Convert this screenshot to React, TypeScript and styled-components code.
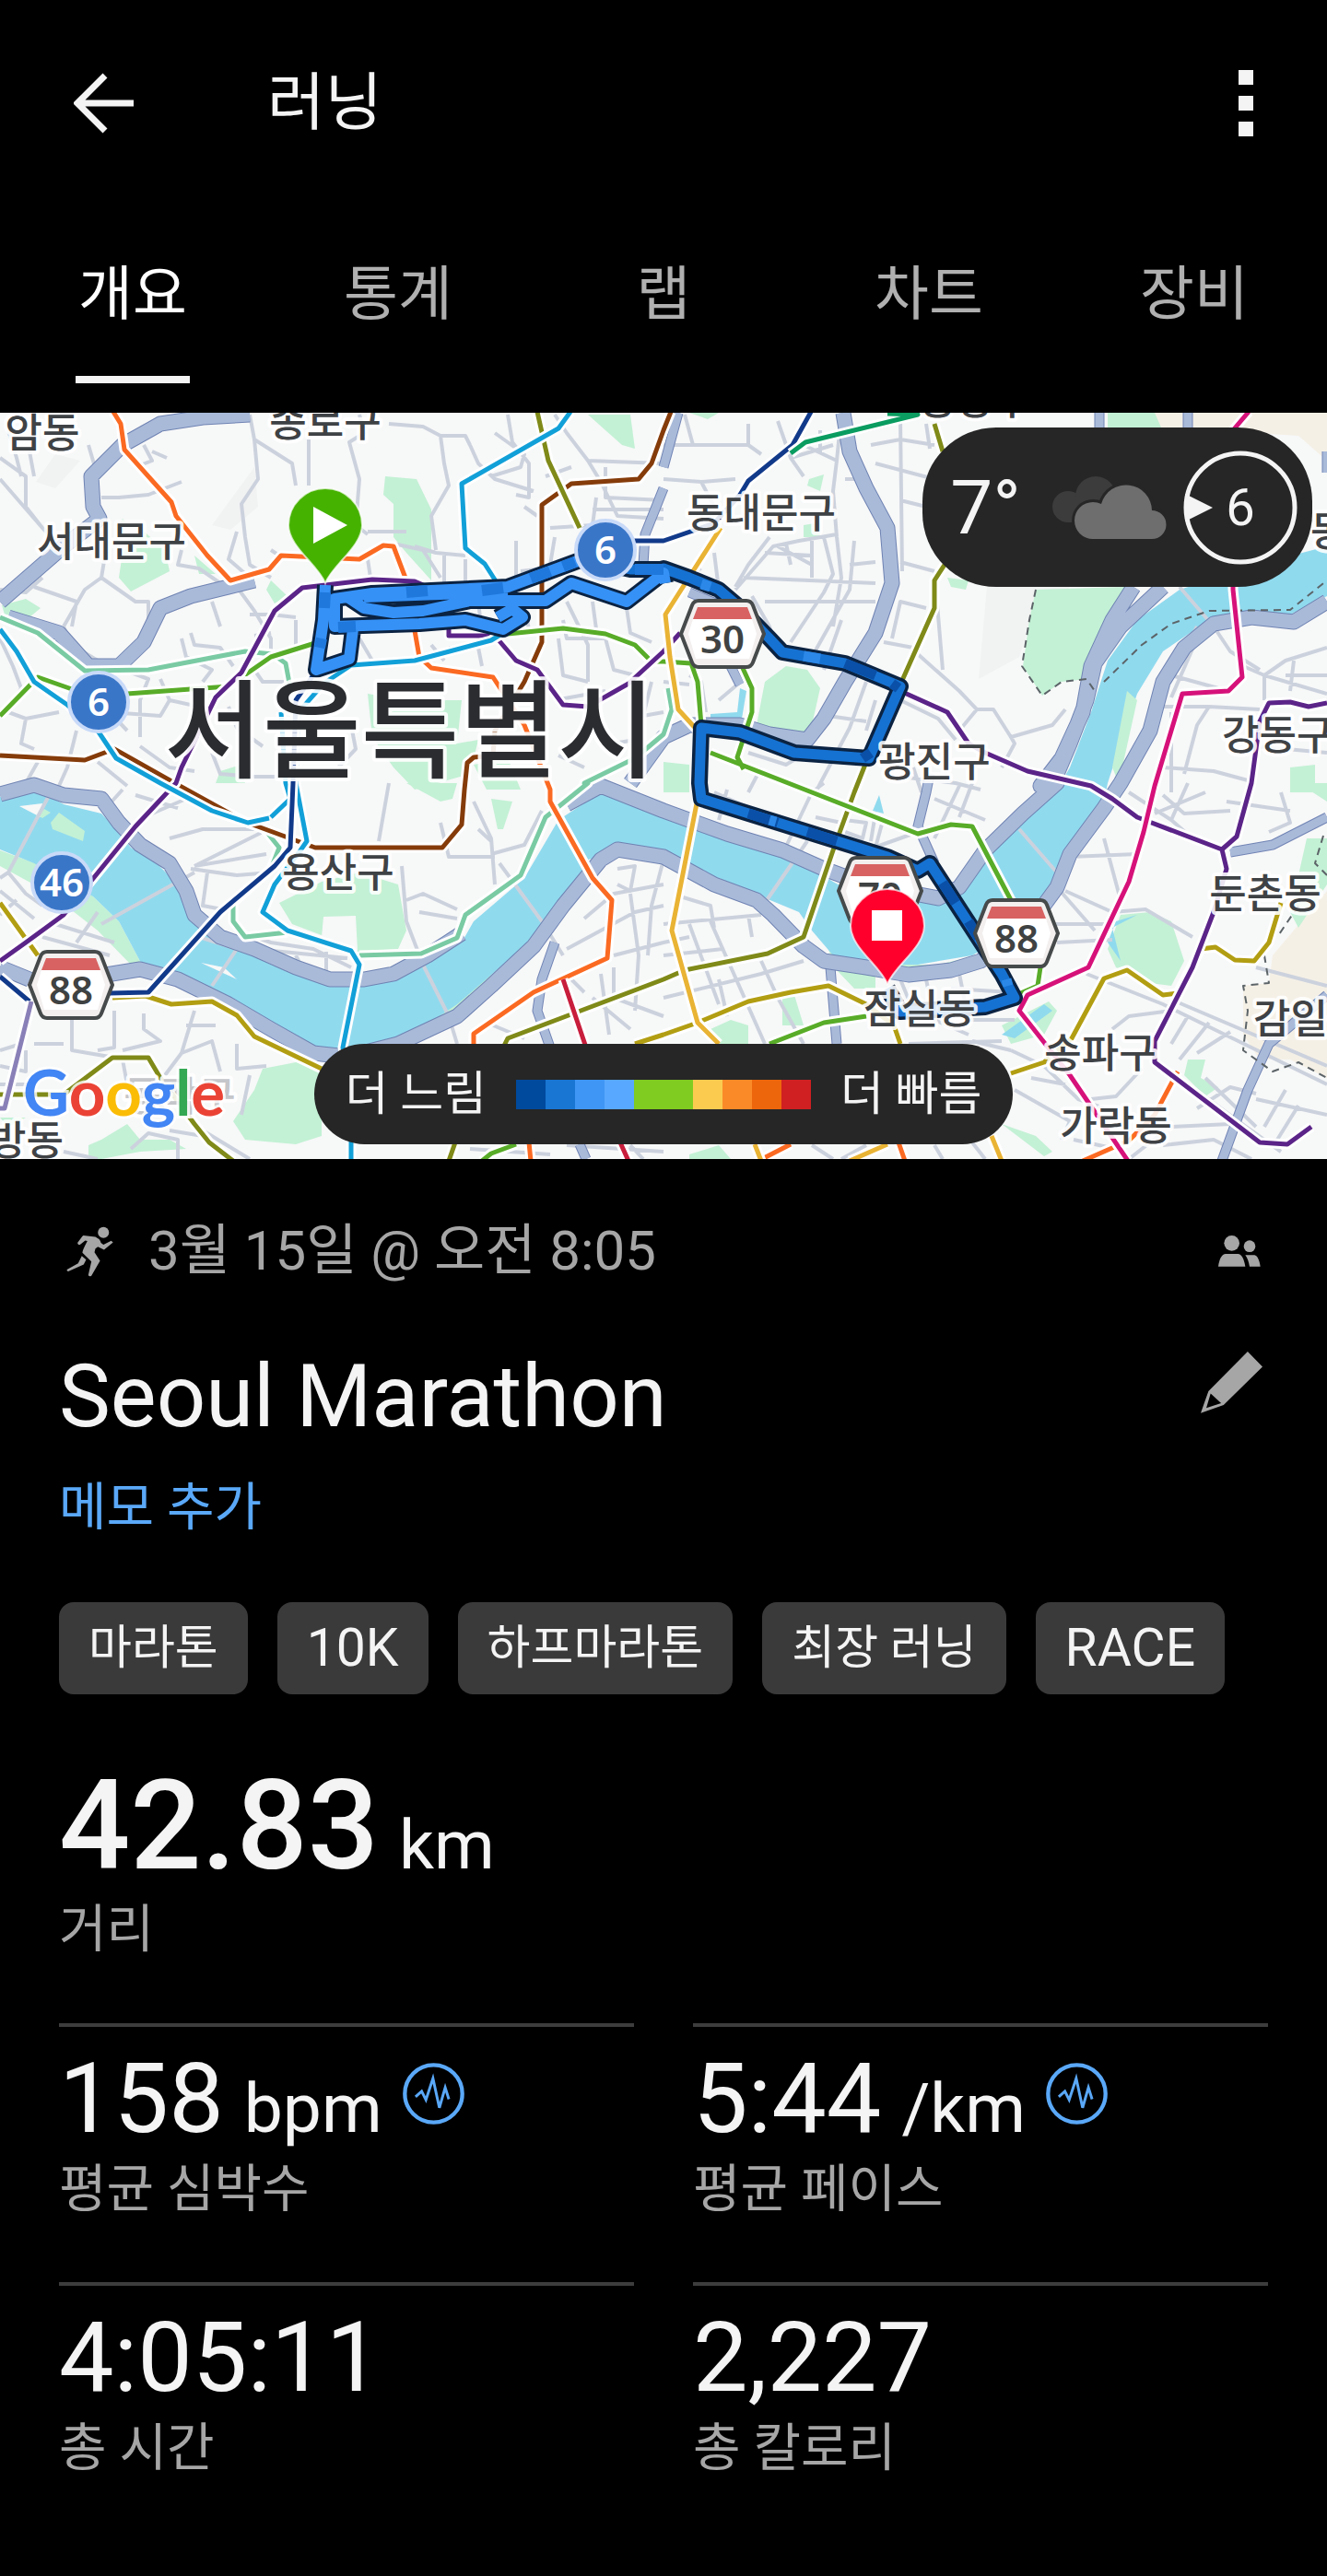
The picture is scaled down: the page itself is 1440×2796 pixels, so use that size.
import React from "react";
import styled, { createGlobalStyle, css } from "styled-components";

const color = {
  page: "#000000",
  text: "#f4f4f4",
  muted: "#a6a6a6",
  accent: "#5aa8f8",
  chip: "#3a3a3a",
  line: "#3d3d3d",
  overlay: "#262626",
};

const fontStack = `Roboto, "Noto Sans CJK KR", sans-serif`;

const GlobalStyle = createGlobalStyle`
  * { box-sizing: border-box; }
  body {
    margin: 0;
    background: ${color.page};
    color: ${color.text};
    font-family: ${fontStack};
  }
  h1, h2, p, dl, dd, dt, ul { margin: 0; padding: 0; }
`;

/* ---------- Layout ---------- */

const Page = styled.main`
  display: flex;
  flex-direction: column;
`;

const plainButton = css`
  border: 0;
  padding: 0;
  background: none;
  color: inherit;
  font-family: inherit;
  cursor: pointer;
`;

const TopBar = styled.header`
  display: flex;
  align-items: center;
  height: 224px;
  padding: 0 64px;
`;

const IconButton = styled.button<{ $width: number }>`
  ${plainButton}
  display: flex;
  align-items: center;
  justify-content: center;
  width: ${(p) => p.$width}px;
  height: 96px;
`;

const ScreenTitle = styled.h1`
  flex: 1;
  padding-left: 128px;
  font-size: 68px;
  line-height: 80px;
  font-weight: 400;
`;

const Tabs = styled.nav`
  display: flex;
  margin-bottom: 32px;
`;

const Tab = styled.button<{ $active?: boolean }>`
  ${plainButton}
  flex: 1;
  display: flex;
  justify-content: center;
  color: ${(p) => (p.$active ? "#ffffff" : "#b0b0b0")};
  font-size: 64px;

  span {
    display: flex;
    align-items: center;
    justify-content: center;
    min-width: 124px;
    height: 192px;
    padding-bottom: 6px;
    border-bottom: 8px solid ${(p) => (p.$active ? color.text : "transparent")};
  }
`;

/* ---------- Map ---------- */

const MapPanel = styled.section`
  position: relative;
`;

const MapCanvas = styled.svg`
  display: block;
  width: 100%;
  height: auto;
`;

const PlaceName = styled.text<{ $size?: number; $ink?: string }>`
  font-family: "Noto Sans CJK KR", sans-serif;
  font-size: ${(p) => p.$size ?? 44}px;
  font-weight: 500;
  fill: ${(p) => p.$ink ?? "#3f4245"};
  stroke: rgba(255, 255, 255, 0.9);
  stroke-width: 8px;
  stroke-linejoin: round;
  paint-order: stroke;
`;

const ShieldText = styled.text<{ $ink: string }>`
  font-family: "Noto Sans", sans-serif;
  font-size: 42px;
  font-weight: 600;
  fill: ${(p) => p.$ink};
  text-anchor: middle;
`;

const Attribution = styled.text`
  font-family: Lato, sans-serif;
  font-size: 69px;
  font-weight: 700;
  stroke: rgba(255, 255, 255, 0.8);
  stroke-width: 6px;
  paint-order: stroke;
`;

const WeatherPill = styled.div`
  position: absolute;
  top: 16px;
  right: 16px;
  display: flex;
  align-items: center;
  justify-content: flex-end;
  gap: 18px;
  width: 423px;
  height: 173px;
  padding: 0 16px;
  border-radius: 80px;
  background: ${color.overlay};
`;

const Temperature = styled.span`
  padding-right: 16px;
  font-size: 82px;
  line-height: 96px;
`;

const Wind = styled.div`
  display: grid;
  place-items: center;

  svg,
  span {
    grid-area: 1 / 1;
  }

  span {
    font-size: 56px;
    line-height: 64px;
  }
`;

const PaceLegend = styled.div`
  position: absolute;
  bottom: 16px;
  left: 50%;
  transform: translateX(-50%);
  display: flex;
  align-items: center;
  justify-content: center;
  gap: 32px;
  width: 758px;
  height: 109px;
  border-radius: 55px;
  background: ${color.overlay};
  font-size: 51px;
  line-height: 64px;
  white-space: nowrap;
`;

const Scale = styled.div`
  display: flex;
`;

const Swatch = styled.i<{ $fill: string }>`
  width: 32px;
  height: 32px;
  background: ${(p) => p.$fill};
`;

/* ---------- Details ---------- */

const Details = styled.section`
  padding: 64px 64px 0;
`;

const MetaRow = styled.div`
  display: flex;
  align-items: center;
  gap: 38px;
  height: 72px;
  padding: 0 8px;
  color: ${color.muted};
  font-size: 60px;
  line-height: 72px;
`;

const When = styled.p`
  flex: 1;
`;

const TitleRow = styled.div`
  display: flex;
  justify-content: space-between;
  align-items: flex-start;
  margin-top: 66px;
  padding-right: 6px;
  color: ${color.muted};
`;

const ActivityTitle = styled.h2`
  color: ${color.text};
  font-size: 94px;
  line-height: 112px;
  font-weight: 400;
`;

const EditButton = styled.button`
  ${plainButton}
  display: flex;
  align-items: center;
  height: 80px;
`;

const MemoButton = styled.button`
  ${plainButton}
  display: block;
  margin-top: 28px;
  color: ${color.accent};
  font-size: 56px;
  line-height: 72px;
`;

const Chips = styled.ul`
  display: flex;
  flex-wrap: wrap;
  gap: 32px;
  margin-top: 67px;
  list-style: none;
`;

const Chip = styled.li<{ $latin?: boolean }>`
  padding: 0 32px;
  border-radius: 16px;
  background: ${color.chip};
  font-size: ${(p) => (p.$latin ? 57 : 51)}px;
  line-height: 100px;
`;

const Stat = styled.div`
  display: flex;
  flex-direction: column-reverse;
`;

const StatLabel = styled.dt`
  color: ${color.muted};
  font-size: 56px;
  line-height: 64px;
`;

const Distance = styled(Stat).attrs({ as: "dl" })`
  margin: 63px 0 70px;
`;

const DistanceValue = styled.dd`
  display: flex;
  align-items: baseline;
  gap: 22px;
  font-size: 136px;
  line-height: 160px;
  font-weight: 500;
`;

const Unit = styled.span`
  font-size: 75px;
  line-height: 80px;
  font-weight: 400;
`;

const StatGrid = styled.dl`
  display: grid;
  grid-template-columns: 1fr 1fr;
  gap: 69px 64px;
`;

const GridStat = styled(Stat)`
  gap: 6px;
  padding-top: 18px;
  border-top: 4px solid ${color.line};
`;

const StatValue = styled.dd`
  display: flex;
  align-items: baseline;
  gap: 22px;
  font-size: 106px;
  line-height: 120px;
`;

const TrendButton = styled.button`
  ${plainButton}
  display: flex;
  align-self: center;
  padding-bottom: 12px;
`;

/* ---------- Icons ---------- */

const BackIcon = () => (
  <svg width="66" height="66" viewBox="0 0 66 66" fill="none" stroke={color.text} strokeWidth="7">
    <path d="M34 3 4 33l30 30M4 33h61" />
  </svg>
);

const MoreIcon = () => (
  <svg width="16" height="72" viewBox="0 0 16 72" fill={color.text}>
    <path d="M0 0h16v16H0zM0 28h16v16H0zM0 56h16v16H0z" />
  </svg>
);

const RunnerIcon = () => (
  <svg width="51" height="55" viewBox="36 34 152 164" fill="currentColor">
    <circle cx="156" cy="54" r="18" />
    <path d="M91 64 130 68 142 76Q146 80 148 88L156 94 181 81 187 86 158 110 138 100 130 106 127 118 145 146 117 194Q110 198 107 192L117 148 88 120Q87 114 104 82L97 80 80 94Q73 96 72 88L88 66Z" />
    <path d="M86 130 100 142 92 158 42 180Q36 178 38 174L74 154Z" />
  </svg>
);

const PeopleIcon = () => (
  <svg width="46" height="34" viewBox="94 38 138 102" fill="currentColor">
    <circle cx="138" cy="63" r="25" />
    <circle cx="196" cy="73" r="19" />
    <path d="M94 139C97 115 106 98 118 98H158C170 98 178 115 182 139Z" />
    <path d="M182 102H212C222 103 229 122 231 139H196C193 122 189 112 182 102Z" />
  </svg>
);

const PencilIcon = () => (
  <svg width="67" height="67" viewBox="38 407 200 200" fill="currentColor" fillRule="evenodd">
    <path d="M190 407 238 456 112 580 38 606 63 535ZM70 543 104 574 56 590Z" />
  </svg>
);

const TrendIcon = () => (
  <svg width="67" height="67" viewBox="38 61 202 202" fill="none" stroke={color.accent}>
    <circle cx="139" cy="162" r="94" strokeWidth="13" />
    <path d="M80 172 100 154 114 182 137 112 158 208 177 142 189 180" strokeWidth="9" />
  </svg>
);

const CloudIcon = () => (
  <svg width="124" height="68" viewBox="0 0 124 68">
    <g fill="#3c3c3c">
      <circle cx="17" cy="33" r="17" />
      <circle cx="47" cy="22" r="22" />
      <path d="M17 22h30v28H17z" />
    </g>
    <g fill="#6e6e6e" stroke={color.overlay} strokeWidth="6" paintOrder="stroke">
      <path d="M44 68a20 20 0 0 1 0-40q5 0 9 2a28 28 0 0 1 55 7 15.500 15.500 0 0 1 0 31z" />
    </g>
  </svg>
);

const WindDial = () => (
  <svg width="124" height="124" viewBox="0 0 124 124">
    <circle cx="62" cy="62" r="59" fill="none" stroke={color.text} strokeWidth="5" />
    <path d="M2 47 32 62 2 77Z" fill={color.text} />
  </svg>
);

/* ---------- Map data ----------
   Coordinates are written per survey sheet. A letter switches the sheet and
   the pairs that follow are in that sheet's own units. */

const sheets: Record<string, [number, number]> = {
  A: [0, 440],
  B: [720, 440],
  C: [0, 850],
  D: [720, 850],
};
const UNIT_X = 720 / 1568;
const UNIT_Y = 1 / 3;

function trace(source: string): string {
  let origin = sheets.A;
  let pen = "M";
  return source
    .trim()
    .split(/\s+/)
    .map((token) => {
      if (token === "/") {
        pen = "M";
        return "";
      }
      if (sheets[token]) {
        origin = sheets[token];
        return "";
      }
      const [x, y] = token.split(",").map(Number);
      const point = `${pen}${Math.round(origin[0] + x * UNIT_X)} ${Math.round(origin[1] + y * UNIT_Y)}`;
      pen = "L";
      return point;
    })
    .join("");
}

const parks = trace(`
  A 910,230 985,240 1020,340 1020,570 960,480 930,430 930,320 905,290 /
  A 290,480 330,400 390,470 400,540 310,605 280,560 / A 290,370 280,390 300,385 /
  A 5,650 60,630 95,660 70,690 10,680 / A 640,570 680,620 650,645 630,600 / A 460,490 510,550 470,550 /
  A 1390,30 1490,30 1500,140 1470,130 1430,80 / A 870,940 960,960 1030,960 1090,960 1080,1100 1130,1090 1110,1200 980,1250 930,1180 880,1080 /
  A 520,1190 570,1170 580,1230 510,1230 / A 1120,1170 1200,1150 1230,1250 1150,1250 /
  B 880,600 1090,590 1050,720 1010,830 1000,890 940,900 895,945 850,850 865,700 /
  B 240,900 290,850 340,860 370,920 350,1040 320,1085 220,1040 / B 345,240 380,225 370,280 340,260 / B 330,390 370,380 370,430 330,430 /
  B 670,560 720,570 715,600 680,590 / B 60,25 130,25 105,45 / B 1050,25 1160,25 1175,72 1050,72 / B 0,1160 60,1170 60,1260 0,1260 /
  B 1480,1180 1540,1170 1540,1260 1480,1260 / B 150,1050 250,1060 350,1090 250,1090 /
  C 0,220 130,285 220,370 280,450 335,590 310,590 230,480 120,360 0,270 /
  C 660,390 760,320 850,290 940,330 960,480 940,540 840,550 770,500 690,460 /
  C 620,930 700,910 760,925 760,1150 700,1175 580,1160 550,1100 600,1000 /
  C 240,1160 300,1110 330,1160 400,1160 440,1190 330,1200 240,1225 210,1225 210,1180 /
  C 960,0 1080,0 1070,50 1040,60 / C 1160,50 1210,60 1190,150 1175,150 / C 0,1090 60,1090 20,1120 /
  C 1330,400 1350,350 1220,580 1080,740 980,820 1060,710 1190,600 /
  D 1080,430 1150,420 1200,450 1230,580 1200,660 1150,650 1070,600 1050,540 /
  D 1500,0 1568,0 1568,60 / D 1520,180 1568,180 1568,330 1500,470 1480,420 /
  D 110,800 160,770 200,790 200,850 120,850 / D 280,690 310,690 330,790 280,790 / D 410,610 500,610 500,670 450,670 /
  D 800,790 910,710 930,740 900,820 820,850 / D 1240,900 1280,900 1270,960 1310,990 1280,1020 1230,950 / D 800,1110 880,1150 920,1200 900,1215 /
  D 60,1210 130,1180 160,1225 60,1225 / D 390,540 520,590 650,590 740,560 700,600 560,620 400,590
`);

const uplands = trace(`
  A 500,390 600,200 610,330 545,405 / A 85,250 130,160 190,180 130,270 /
  B 765,590 960,590 870,700 840,820 745,890 /
`);

const desert = trace(`
  B 1160,25 1568,25 1568,180 1500,100 1400,90 1300,72 1170,72 /
  D 1440,560 1568,350 1568,960 1480,900 1410,900 1370,820 1370,660 1430,650
`);

const clearings = trace(`C 765,435 840,432 845,545 760,500`);

const water = trace(`
  C 0,45 60,25 100,30 150,70 240,100 280,160 310,210 370,260 420,330 450,430 490,490 560,530 640,590 740,645 830,660 930,640 1000,590
  1090,520 1120,450 1240,310 1320,120 1420,30 1568,110 D 140,170 210,205 330,260 400,320 440,350 620,370 700,330 780,220 880,80 930,20
  B 960,1180 1010,1000 1050,830 1120,700 1220,600 1450,500 1568,460 1568,620 1480,680 1330,690 1290,700 1180,800 1120,940 1080,1100 1050,1230
  D 1040,60 980,160 930,280 920,350 830,480 730,560 600,590 520,590 400,560 350,480 320,420 230,370 130,310 0,260
  C 1480,220 1420,260 1330,400 1240,530 1080,720 960,830 800,870 740,870 640,800 500,680 380,620 335,590 280,450 220,370 80,260 0,215 /
  D 510,40 520,100 495,90 / D 1120,430 1060,470 1080,580 1050,520 1070,450 / D 800,820 900,720 920,740 830,830 / B 180,920 195,930 185,1020 110,1020 110,1005 175,1000
`);

const islets = trace(`C 45,75 100,65 95,110 / C 475,585 530,600 560,640 / C 1390,250 1420,240 1400,270`);
const greenIslets = trace(`C 120,130 140,95 200,155 195,190 125,150 / C 90,105 105,85 120,95 100,115 / B 1120,960 1095,930 1060,1180 1075,1230`);

const streets = trace(`
  A 590,30 600,110 690,190 700,260 / A 600,110 610,240 570,320 580,430 590,520 640,560 / A 730,110 730,260 / A 850,30 860,90 825,120 850,240 840,390 870,420 /
  A 920,60 1000,70 1040,100 1100,100 1110,130 / A 1040,100 1050,190 1060,260 1020,360 1030,470 / A 1110,130 1130,190 1170,240 1260,280 /
  A 1170,90 1240,160 1230,200 1160,230 / A 1200,30 1210,120 1250,190 1250,300 1220,290 / A 1240,330 1270,360 / A 1310,30 1340,90 1390,180 1420,250 1460,360 1568,370 /
  A 1390,180 1568,190 / A 1430,200 1430,300 1568,310 / A 1290,230 1350,200 / A 1410,300 1400,390 1300,400 / A 1568,340 1400,340 /
  A 0,170 60,230 60,330 100,400 130,440 / A 20,80 40,170 50,230 / A 0,240 100,400 / A 70,150 80,230 / A 210,130 225,200 / A 340,130 360,180 320,200 / A 360,150 395,170 /
  A 430,250 350,290 280,300 240,300 / A 210,400 240,420 / A 560,410 540,500 590,560 / A 430,470 420,520 470,530 520,580 / A 640,470 660,490 720,500 /
  A 870,410 960,410 / A 870,500 880,600 / A 980,460 1030,480 1100,490 / A 930,450 1000,470 1040,560 / A 1050,490 1050,590 / A 1220,440 1220,560 / A 1310,430 1300,520 / A 1230,540 1360,520 /
  A 0,600 60,610 100,560 / A 250,470 240,560 200,600 150,720 / A 80,590 180,640 170,720 / A 240,560 320,640 350,640 350,700 / A 150,720 170,780 230,830 /
  A 560,590 600,670 640,760 640,830 / A 430,760 440,820 500,860 480,900 / A 450,740 460,780 520,790 550,850 / A 590,680 640,680 700,690 / A 600,750 640,740 /
  A 0,760 30,850 50,920 20,1000 60,1020 50,1100 80,1120 / A 60,1020 140,1000 / A 180,1060 160,1180 140,1240 / A 310,870 350,890 330,960 330,1080 / A 300,1060 260,1000 380,1010 400,960 /
  A 380,890 400,960 470,980 / A 90,1160 60,1230 / A 230,1160 300,1240 / A 330,1110 400,1180 460,1190 / A 500,1130 520,1200 600,1210 660,1210 / A 540,980 560,1050 620,1110 / A 600,860 620,900 680,900 /
  A 830,1040 840,1120 800,1180 / A 850,760 880,830 960,830 / A 1020,780 1050,830 / A 1060,790 1130,790 1140,850 / A 1320,760 1330,880 1390,900 / A 1340,640 1390,780 1390,900 / A 1480,660 1490,740 1540,770 /
  A 1430,760 1450,860 1500,880 / A 1310,960 1430,930 / A 1400,1060 1450,1100 1500,1090 / A 1320,1140 1380,1180 / A 1540,900 1520,1010 1568,1000 /
  A 700,700 700,800 / A 1100,500 1100,600 / A 1130,640 1140,740 / A 1240,660 1250,730 / A 1330,700 1340,760 1470,760 / A 1400,640 1410,730 / A 1030,590 1130,600 / A 500,640 520,720 /
  B 0,130 200,130 230,160 / B 50,30 70,130 / B 200,60 200,130 / B 0,240 90,250 170,240 / B 90,250 120,330 / B 270,50 300,170 330,230 / B 330,130 410,180 420,30 / B 370,80 370,160 / B 410,180 400,280 410,430 / B 300,170 400,130 /
  B 430,240 480,240 / B 560,40 565,540 / B 490,130 560,110 640,130 / B 500,190 640,240 / B 560,310 620,330 / B 620,60 630,140 / B 480,80 540,60 / B 120,480 130,600 / B 0,560 90,530 /
  B 170,600 260,460 320,440 410,420 / B 190,560 500,580 / B 250,430 200,520 170,590 / B 270,460 350,520 / B 240,480 350,490 / B 290,450 300,520 / B 350,440 350,560 / B 380,430 400,550 380,610 300,770 /
  B 410,430 420,560 400,720 / B 450,440 440,600 350,820 / B 210,620 250,720 260,760 / B 240,640 500,640 / B 420,700 380,860 / B 500,510 440,520 / B 560,510 640,540 / B 540,760 560,640 620,660 /
  B 520,770 590,790 / B 480,900 440,1050 360,1260 / B 500,960 480,1060 / B 560,960 650,1020 690,1090 / B 640,540 660,860 / B 600,810 700,930 / B 700,930 740,990 780,990 820,1080 / B 740,990 700,1060 /
  B 820,1080 920,1040 950,990 / B 820,1080 830,1100 800,1180 / B 1220,590 1300,720 1340,800 1410,860 / B 1260,760 1200,950 / B 1260,720 1200,880 1310,920 / B 1370,850 1420,880 1470,830 1568,790 / B 1420,880 1420,960 /
  B 1470,880 1568,880 / B 1490,830 1480,930 / B 1420,880 1568,940 / B 1170,980 1290,980 1410,990 / B 1290,980 1260,1040 1230,1200 / B 1200,1000 1200,1260 / B 1180,1180 1300,1190 1380,1220 / B 1400,1110 1568,1130 /
  B 60,880 90,900 100,1000 / B 130,960 200,880 / B 0,900 60,910 / B 390,1010 480,1030 / B 560,1210 690,1230 750,1250 / B 590,1180 610,1260 / B 200,1130 290,1170 350,1120 / B 230,1180 200,1260 /
  C 120,30 20,290 0,310 / C 20,290 60,360 100,400 / C 460,290 240,460 / C 0,350 80,440 / C 230,420 180,520 / C 130,460 270,520 / C 100,500 260,560 / C 40,380 0,430 / C 320,40 420,80 / C 290,20 250,80 / C 340,110 440,50 / C 400,180 480,150 600,150 /
  C 460,270 620,160 / C 460,270 630,230 / C 450,280 560,300 640,290 / C 490,290 480,400 560,420 / C 560,480 640,520 740,540 830,600 / C 600,540 820,570 / C 700,560 720,620 / C 770,550 770,620 / C 470,500 560,540 500,660 /
  C 920,0 895,190 / C 950,270 960,450 1000,590 1060,760 1080,850 / C 1120,60 1160,180 1170,330 / C 1040,130 1060,240 1170,240 / C 1180,260 1280,450 1330,560 / C 1160,230 1240,200 1280,90 / C 990,420 1080,440 / C 960,380 1000,360 1080,410 /
  C 1130,150 1160,190 / C 460,740 430,880 / C 270,740 270,860 230,870 / C 340,750 340,800 380,840 290,870 / C 170,770 170,870 260,890 / C 430,880 500,840 520,940 / C 440,790 510,790 / C 60,780 50,850 0,870 / C 80,850 150,850 / C 60,870 60,940 0,920 / C 430,880 390,950 /
  C 290,900 300,980 / C 560,850 560,930 630,920 / C 350,1000 410,1100 / C 590,950 570,1080 / C 0,980 80,980 / C 480,1130 590,1225 / C 310,1190 350,1140 420,1160 420,1225 / C 400,1130 480,1150 / C 150,1200 230,1225 /
  C 1380,440 1450,360 1568,330 / C 1340,540 1500,420 1568,400 / C 1490,360 1510,560 1500,740 / C 1568,250 1540,400 1530,560 / C 1350,640 1380,680 / C 1450,560 1568,520 / C 1460,280 1500,270 1490,350 1460,330 / C 1450,600 1450,700 1568,760 / C 1400,700 1490,800 / C 1420,620 1440,820 /
  C 1110,1190 1300,1210 / C 1340,1180 1568,1200 / C 1490,1180 1520,1225 / C 1150,780 1240,830 /
  D 0,460 230,430 / D 40,370 110,400 120,470 / D 200,430 210,500 / D 60,460 130,720 / D 110,450 240,850 / D 230,580 270,700 330,850 / D 0,520 60,500 / D 0,700 230,620 330,580 / D 130,640 150,760 / D 0,560 140,540 / D 340,190 240,390 / D 280,230 350,30 380,0 / D 120,30 330,160 /
  D 150,20 130,120 / D 400,60 500,100 490,190 / D 360,110 420,130 / D 430,120 480,130 470,180 430,160 / D 480,220 600,160 / D 520,110 500,210 / D 700,10 640,180 / D 640,50 760,120 / D 730,0 700,110 / D 840,150 940,310 / D 960,240 1120,230 / D 1040,180 1080,380 /
  D 950,350 1060,420 1140,410 1250,500 / D 930,340 1020,480 / D 890,460 1060,460 / D 930,520 1060,510 / D 620,640 640,770 720,820 / D 700,620 720,770 830,770 / D 680,670 820,680 / D 560,640 590,740 / D 580,850 800,840 / D 730,840 820,870 / D 1000,620 1180,720 1300,800 1568,980 /
  D 1210,710 1568,920 / D 1200,740 1100,760 1060,800 / D 1240,760 1200,850 / D 1290,780 1220,900 / D 1340,810 1260,880 / D 1400,600 1568,660 / D 1100,30 1200,120 1250,180 / D 1180,40 1230,100 1340,90 / D 1160,100 1280,30 / D 1240,0 1200,120 / D 1330,60 1480,90 / D 1460,30 1480,130 1430,160 /
  D 820,870 900,920 980,1030 1040,1060 / D 1010,1030 1070,1020 1130,930 / D 870,960 950,980 / D 830,1000 960,1100 940,1160 / D 1220,960 1360,1100 1460,1200 / D 1260,1060 1340,990 1400,1010 / D 1200,1120 1340,1110 / D 1280,960 1400,1120 / D 1180,1180 1300,1160 1390,1225 / D 1400,1030 1568,1080 / D 1470,1000 1420,1120 / D 1500,1050 1450,1160 / D 1100,1225 1170,1150 / D 970,1160 1070,1190 / D 640,1180 660,1225 / D 350,1180 400,1225 / D 420,1225 480,1180 / D 730,1170 760,1225
`);

const expressways = trace(`
  A 590,30 480,40 380,60 290,130 215,230 220,330 235,370 150,460 0,640 / A 600,570 540,590 450,620 380,660 340,770 280,850 210,850 140,740 20,690 /
  C 0,35 80,5 150,40 240,50 280,130 330,200 400,260 440,350 460,430 520,500 600,540 700,600 780,640 860,640 930,620 1010,560 1090,490 /
  C 0,600 70,640 / C 250,625 330,605 420,640 540,720 640,800 740,880 820,890 940,850 1080,760 1160,660 1260,530 1330,400 1420,250 1460,215 1568,240
  D 120,330 220,380 260,430 330,530 380,580 480,600 580,625 680,610 750,580 860,470 930,340 960,230 1040,80 B 1080,1230 1150,1060 1180,900 1230,790 1300,710 1390,690 1490,705 1568,640 /
  C 1340,70 1420,10 1568,90 D 150,165 280,220 380,280 480,330 650,375 700,340 760,220 850,100 930,0 B 890,1240 940,1150 990,1000 1010,850 1060,700 1110,590 /
  B 1180,590 1080,720 1020,840 1000,960 960,1100 930,1200 /
  B 425,25 440,150 480,270 530,400 540,580 500,740 430,900 380,1020 340,1090 250,1070 180,1040 60,1040 0,1080 A 1490,1230
`);

const motorLinks = trace(`
  B 35,25 0,200 / A 1568,270 1525,420 1520,520 / B 1030,25 1030,72 / B 1240,25 1240,72 / B 1568,150 1568,220 / B 160,850 180,910 / B 630,1200 620,1260 D 600,140 640,260 /
  C 1310,520 1280,640 1270,740 1300,860 / C 1370,1175 1385,1225 / D 395,600 410,850 / D 1340,225 1440,200 1568,110 / D 1568,690 1430,850 1380,1000 1320,1230 / B 60,610 150,660
`);

const subways: { line: string; stroke: string; path: string }[] = [
  {
    line: "mint",
    stroke: "#7acba4",
    path: `A 0,690 90,740 200,865 350,862 580,800 645,810 675,840 685,920 / C 625,150 660,210 640,280 550,390 550,450 580,500 680,485 / C 850,560 995,555 1080,505 1100,430 1230,300 1290,110 1390,0 A 1380,1230 1500,1150 1568,1070 B 20,990 10,920`,
  },
  {
    line: "brown",
    stroke: "#853c0a",
    path: `B 18,20 0,80 A 1540,190 1510,240 1350,255 1280,325 1280,770 1240,900 1170,1060 1165,1140 1120,1145 1105,1165 1098,1250 C 1090,135 1045,210 745,210 580,125 425,10 A 270,1120 200,1155 0,1140`,
  },
  {
    line: "olive",
    stroke: "#7f8a18",
    path: `A 1270,20 1295,180 1370,400 / B 640,60 660,150 / B 665,520 640,570 640,660 560,910 480,1160 450,1260 D 400,220 330,500 245,555 50,610 0,640 C 1200,830 1190,860 / C 1075,1170 1060,1230 / C 0,1015 150,1015 265,895 350,895 380,960 460,1110 495,1170 550,1230`,
  },
  {
    line: "gold",
    stroke: "#b29e12",
    path: `C 0,390 90,560 / C 265,700 345,692 405,720 500,712 560,755 600,825 760,930 / D 0,820 80,780 200,710 300,680 390,660 480,720 545,790 560,850 / D 820,945 900,910 965,830 1040,635 1095,610 1180,690 1215,685 1270,540 1305,535 1350,575 1395,580 1430,520 1460,390 / C 1500,850 1568,820`,
  },
  {
    line: "green",
    stroke: "#58ac28",
    path: `A 0,1010 90,885 170,925 300,938 540,915 640,820 745,775 / A 1200,745 1330,725 1430,745 1500,780 1540,835 1568,835 B 65,840 80,900 90,1040 / B 185,850 210,920 210,1000 175,1145 190,1185 / B 110,1130 350,1260 D 600,165 680,135 730,140 820,380 890,600 885,660 835,690 / D 480,760 380,780 250,850 / C 1140,1230 1160,1205 1220,1175`,
  },
  {
    line: "orange",
    stroke: "#fb6a22",
    path: `A 268,20 285,60 295,145 405,315 415,360 490,490 545,570 635,535 665,490 850,500 905,455 930,460 960,570 975,700 990,820 1020,855 1165,885 1240,1040 1300,1250 C 1300,60 1400,310 1445,380 1435,570 1260,680 1120,815 1120,900 / C 1250,1170 1255,1230 / D 1215,940 1160,1080 1100,1165 990,1230 / D 300,1175 225,1230 / D 555,1170 570,1230`,
  },
  {
    line: "violet",
    stroke: "#5b2488",
    path: `C 0,580 60,520 150,430 320,140 415,0 A 430,1180 510,950 570,870 650,670 715,595 880,568 980,572 1060,620 1060,750 1170,750 1220,830 1270,860 1330,975 1390,980 1485,905 1568,800 B 40,740 / B 560,930 670,1000 720,1100 760,1130 860,1190 1010,1240 D 1060,50 1120,110 1320,215 1330,280 1300,420 1250,600 1160,840 1160,910 1410,1170 1475,1175 1530,1120 / D 1320,215 1355,175 1390,0 B 1410,1030 1430,970 1480,965 1525,980 1568,970`,
  },
  {
    line: "sky",
    stroke: "#12a0d8",
    path: `A 1348,20 1320,75 1090,255 1100,465 1145,515 1180,590 1190,740 1160,765 980,830 830,845 765,905 705,1000 700,1230 C 725,190 710,220 650,330 620,420 680,480 830,545 850,590 810,860 830,1000 830,1230 / A 665,1000 675,1230 C 685,50 640,110 / A 0,730 40,800 80,900 160,975 230,1060 275,1150 380,1230 C 500,90 585,130 635,115`,
  },
  {
    line: "navy",
    stroke: "#123a8a",
    path: `A 745,870 700,960 692,1230 C 685,210 650,270 520,420 350,680 260,685 / A 1490,440 1568,440 B 120,385 180,290 200,245 305,130 348,20 / C 0,630 70,710`,
  },
  { line: "emerald", stroke: "#0a9c60", path: `B 300,155 335,120 600,30 530,28` },
  {
    line: "amber",
    stroke: "#e9b334",
    path: `B 135,400 5,680 15,820 35,990 80,1060 D 80,50 20,480 80,780 130,850 / D 440,1230 530,1175 / D 775,1150 800,1230 / D 215,1175 230,1230`,
  },
  {
    line: "magenta",
    stroke: "#d6127a",
    path: `B 1383,20 1345,80 1345,600 1368,885 1335,930 1225,938 1160,1240 D 1135,160 1100,320 1005,600 860,690 840,740 960,950 1097,1230`,
  },
  { line: "crimson", stroke: "#c81e3c", path: `C 1330,640 1385,860 / C 1465,1170 1485,1230` },
  { line: "lavender", stroke: "#8a80b8", path: `C 75,710 10,1060 0,1060` },
];

const boundaries = trace(`
  B 880,600 865,700 848,850 895,945 940,900 1000,890 1020,930 / B 1040,900 1130,780 1200,710 1290,670 1480,665 1568,570 /
  D 1560,170 1540,260 1568,300 / D 1500,400 1450,500 / D 1420,560 1430,650 1370,660 1380,740 1370,870 1440,940 1500,910 1568,960
`);

const routeWest = trace(`
  A 768,585 765,700 748,860 825,825 835,730 / A 1400,490 1200,590 880,612 790,630 790,720 990,712 1100,700 1190,730 1235,690 1210,662 1175,690 /
  A 820,625 860,660 930,675 1000,668 1110,635 1290,635 1350,580 1480,640 1568,545 B 5,580 / A 860,625 1100,612 1200,620
`);
const routeEast = trace(`
  A 1440,520 1490,535 1568,535 B 0,530 60,560 130,600 175,650 250,760 280,805 430,840 560,915 485,1150 310,1130 180,1065 90,1050 85,1230
  D 90,50 530,240 600,285 630,260 800,620 830,700 760,730 560,745 530,670
`);
const routeFast = trace(`
  B 430,840 500,880 / B 540,905 556,920 / B 470,1150 490,1130 / D 200,98 270,128 / D 340,158 410,188 / D 660,325 690,390 / D 720,450 745,505
`);
const routeCruise = trace(`
  A 1140,602 1190,595 / A 1255,565 1300,540 / A 1330,525 1360,510 / A 960,608 1010,604 / A 768,610 766,660 / A 760,760 755,790 / A 1500,535 1568,535 / A 800,722 840,720
`);
const routeSlow = trace(`B 90,582 110,592 / B 330,815 370,825 / D 250,120 265,126 / D 810,640 815,660`);

const places: { name: string; x: number; y: number; anchor?: "start" | "end" }[] = [
  { name: "암동", x: 46, y: 486 },
  { name: "종로구", x: 353, y: 474 },
  { name: "서대문구", x: 121, y: 604 },
  { name: "동대문구", x: 826, y: 573 },
  { name: "광진구", x: 1014, y: 843 },
  { name: "강동구", x: 1326, y: 814, anchor: "start" },
  { name: "동", x: 1422, y: 593, anchor: "start" },
  { name: "중랑구", x: 1058, y: 450 },
  { name: "용산구", x: 367, y: 963 },
  { name: "방동", x: 69, y: 1254, anchor: "end" },
  { name: "잠실동", x: 998, y: 1111 },
  { name: "둔촌동", x: 1373, y: 986 },
  { name: "송파구", x: 1194, y: 1159 },
  { name: "가락동", x: 1211, y: 1238 },
  { name: "감일동", x: 1360, y: 1122, anchor: "start" },
];

const RoundShield = ({ x, y, label }: { x: number; y: number; label: string }) => (
  <g transform={`translate(${x} ${y})`}>
    <circle r="32" fill="#3a76c8" stroke="#c8daf8" strokeWidth="4" />
    <ShieldText y="15" $ink="#ffffff">{label}</ShieldText>
  </g>
);

const HexShield = ({ x, y, label }: { x: number; y: number; label: string }) => (
  <g transform={`translate(${x} ${y})`}>
    <path d="M-45 0-33-31Q-31-36-26-36H26Q31-36 33-31L45 0 33 31Q31 36 26 36H-26Q-31 36-33 31Z" fill="#f3efef" stroke="#464a4a" strokeWidth="4" />
    <path d="M-37 0-32-16H32L37 0 29 27H-29Z" fill="#ffffff" />
    <path d="M-27-29H27L32-16H-32Z" fill="#d86262" />
    <ShieldText y="21" $ink="#3f4242">{label}</ShieldText>
  </g>
);

const Pin = ({ x, y, fill, children }: { x: number; y: number; fill: string; children: React.ReactNode }) => (
  <g transform={`translate(${x} ${y})`}>
    <path d="M0 0C-8-20-40-40-40-63A40 40 0 1 1 40-63C40-40 8-20 0 0Z" fill={fill} stroke="#ffffff" strokeOpacity="0.7" strokeWidth="2" />
    {children}
  </g>
);

const googleLetters: [string, string][] = [
  ["G", "#4285f4"],
  ["o", "#ea4335"],
  ["o", "#fbbc05"],
  ["g", "#4285f4"],
  ["l", "#34a853"],
  ["e", "#ea4335"],
];

const CityMap = () => (
  <MapCanvas viewBox="0 448 1440 810" role="img" aria-label="서울특별시 러닝 경로 지도">
    <rect y="448" width="1440" height="810" fill="#f7f8f8" />
    <g stroke="none">
      <path d={uplands} fill="#f1f2f2" />
      <path d={desert} fill="#f5f0e6" />
      <path d={parks} fill="#c3f1d5" />
      <path d={clearings} fill="#f7f8f8" />
      <path d={water} fill="#90daee" />
      <path d={islets} fill="#f7f8f8" />
      <path d={greenIslets} fill="#c3f1d5" />
    </g>
    <g fill="none" strokeLinejoin="round">
      <path d={streets} stroke="#ccd2dd" strokeWidth="4" />
      <path d={motorLinks} stroke="#7184b4" strokeWidth="11" />
      <path d={motorLinks} stroke="#a9bad9" strokeWidth="9" />
      <path d={expressways} stroke="#6f83b2" strokeWidth="17" />
      <path d={expressways} stroke="#a9bad9" strokeWidth="15" />
      <path d={boundaries} stroke="#5c6468" strokeWidth="2" strokeDasharray="8 6" />
      {subways.map(({ line, path, stroke }) => (
        <g key={line}>
          <path d={trace(path)} stroke="#ffffff" strokeWidth="11" />
          <path d={trace(path)} stroke={stroke} strokeWidth="5" />
        </g>
      ))}
      {[routeWest, routeEast].map((d) => (
        <path key={d} d={d} stroke="#0b2342" strokeWidth="18" />
      ))}
      <path d={routeEast} stroke="#1672d2" strokeWidth="11" />
      <path d={routeWest} stroke="#3591f6" strokeWidth="12" />
      <path d={routeFast} stroke="#0a50a8" strokeWidth="11" />
      <path d={routeCruise} stroke="#1f78dc" strokeWidth="12" />
      <path d={routeSlow} stroke="#2c88e8" strokeWidth="11" />
    </g>

    <PlaceName x="195" y="1206" textAnchor="middle" $ink="#c4c6ca">동작구</PlaceName>
    {places.map(({ name, x, y, anchor }) => (
      <PlaceName key={name} x={x} y={y} textAnchor={anchor ?? "middle"}>{name}</PlaceName>
    ))}
    <PlaceName x="445" y="835" textAnchor="middle" $size={116} $ink="#2a2c30">서울특별시</PlaceName>

    <RoundShield x={657} y={597} label="6" />
    <RoundShield x={107} y={762} label="6" />
    <RoundShield x={67} y={958} label="46" />
    <HexShield x={784} y={688} label="30" />
    <HexShield x={77} y={1069} label="88" />
    <HexShield x={955} y={967} label="70" />
    <HexShield x={1103} y={1013} label="88" />

    <Pin x={353} y={633} fill="#46b200">
      <path d="M-13-83 24-63-13-43Z" fill="#ffffff" />
    </Pin>
    <Pin x={963} y={1068} fill="#ff002c">
      <path d="M-17-80H16V-47H-17Z" fill="#ffffff" />
    </Pin>

    <Attribution x="25" y="1211">
      {googleLetters.map(([letter, fill], i) => (
        <tspan key={i} fill={fill}>{letter}</tspan>
      ))}
    </Attribution>
  </MapCanvas>
);

/* ---------- Screen ---------- */

const tabs = ["개요", "통계", "랩", "차트", "장비"];

const paceColors = [
  "#004a9e", "#1976d2", "#4096f4", "#58a8ff", "#80cc20",
  "#80cc20", "#fbcb50", "#fa8a28", "#ee660c", "#d02022",
];

const chips = [
  { label: "마라톤" },
  { label: "10K", latin: true },
  { label: "하프마라톤" },
  { label: "최장 러닝" },
  { label: "RACE", latin: true },
];

const stats = [
  { value: "158", unit: "bpm", label: "평균 심박수", trend: true },
  { value: "5:44", unit: "/km", label: "평균 페이스", trend: true },
  { value: "4:05:11", label: "총 시간" },
  { value: "2,227", label: "총 칼로리" },
];

export default function App() {
  return (
    <>
      <GlobalStyle />
      <Page>
        <TopBar>
          <IconButton $width={98} aria-label="뒤로"><BackIcon /></IconButton>
          <ScreenTitle>러닝</ScreenTitle>
          <IconButton $width={48} aria-label="더보기"><MoreIcon /></IconButton>
        </TopBar>

        <Tabs>
          {tabs.map((name, i) => (
            <Tab key={name} $active={i === 0} aria-current={i === 0 ? "page" : undefined}>
              <span>{name}</span>
            </Tab>
          ))}
        </Tabs>

        <MapPanel>
          <CityMap />
          <WeatherPill>
            <Temperature>7°</Temperature>
            <CloudIcon />
            <Wind>
              <WindDial />
              <span>6</span>
            </Wind>
          </WeatherPill>
          <PaceLegend>
            <span>더 느림</span>
            <Scale>
              {paceColors.map((fill, i) => (
                <Swatch key={i} $fill={fill} />
              ))}
            </Scale>
            <span>더 빠름</span>
          </PaceLegend>
        </MapPanel>

        <Details>
          <MetaRow>
            <RunnerIcon />
            <When>3월 15일 @ 오전 8:05</When>
            <PeopleIcon />
          </MetaRow>
          <TitleRow>
            <ActivityTitle>Seoul Marathon</ActivityTitle>
            <EditButton aria-label="제목 편집"><PencilIcon /></EditButton>
          </TitleRow>
          <MemoButton>메모 추가</MemoButton>
          <Chips>
            {chips.map(({ label, latin }) => (
              <Chip key={label} $latin={latin}>{label}</Chip>
            ))}
          </Chips>

          <Distance>
            <StatLabel>거리</StatLabel>
            <DistanceValue>
              42.83<Unit>km</Unit>
            </DistanceValue>
          </Distance>

          <StatGrid>
            {stats.map(({ value, unit, label, trend }) => (
              <GridStat key={label}>
                <StatLabel>{label}</StatLabel>
                <StatValue>
                  {value}
                  {unit && <Unit>{unit}</Unit>}
                  {trend && (
                    <TrendButton aria-label={`${label} 차트`}><TrendIcon /></TrendButton>
                  )}
                </StatValue>
              </GridStat>
            ))}
          </StatGrid>
        </Details>
      </Page>
    </>
  );
}
